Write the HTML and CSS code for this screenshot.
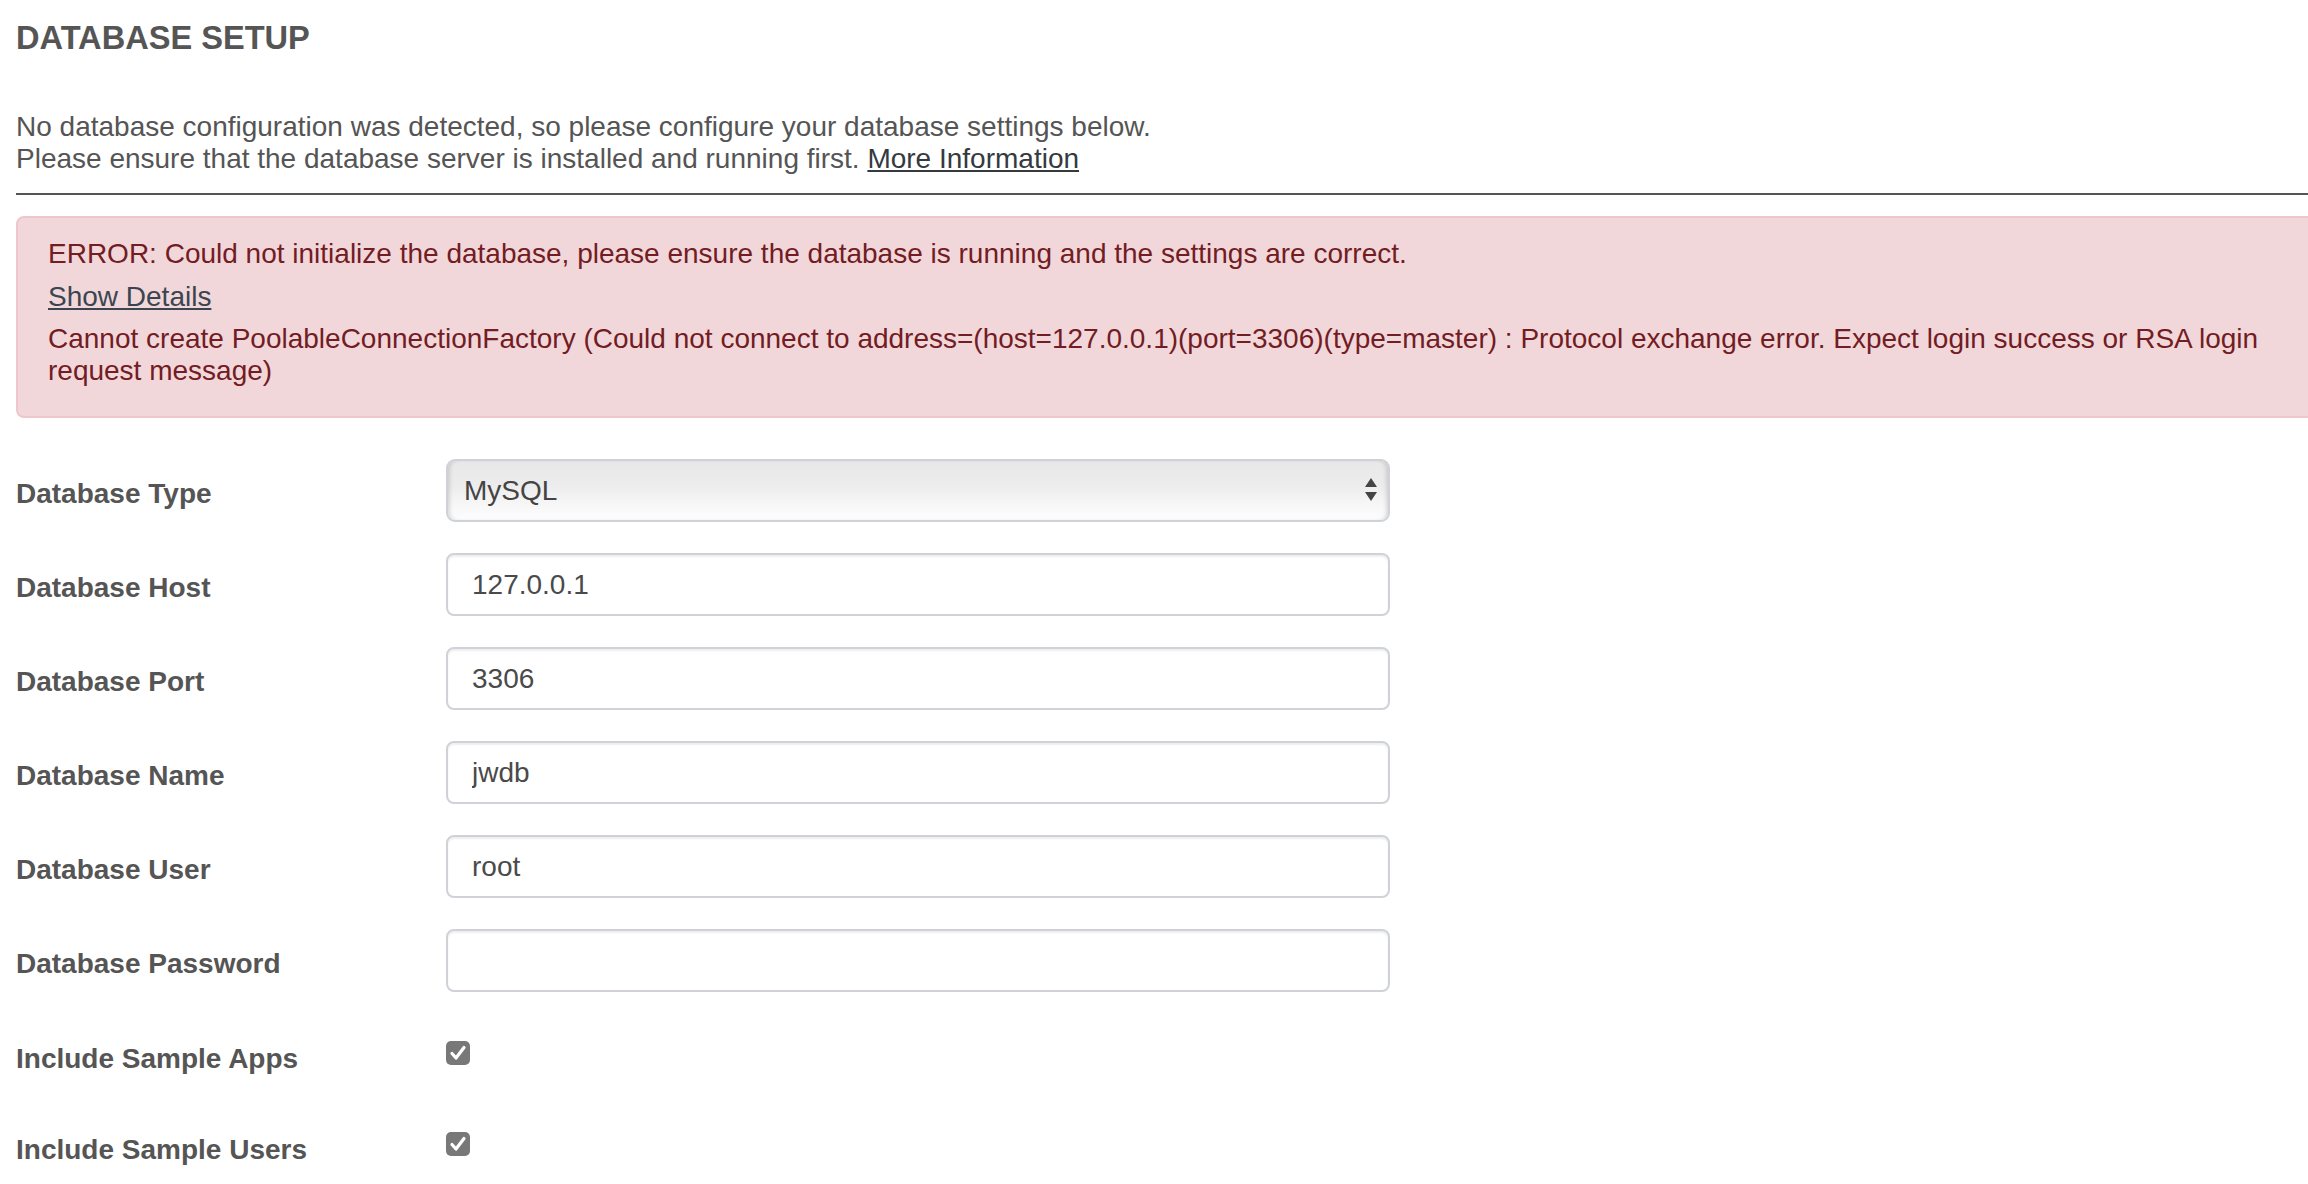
FILE: index.html
```html
<!DOCTYPE html>
<html lang="en">
<head>
<meta charset="utf-8">
<title>Database Setup</title>
<link rel="stylesheet" href="styles.css">
</head>
<body>
<div class="page">
  <h2 class="title">DATABASE SETUP</h2>
  <p class="intro">No database configuration was detected, so please configure your database settings below.<br>Please ensure that the database server is installed and running first. <a class="link" href="#">More Information</a></p>
  <hr class="divider">
  <div class="alert">
    <p class="alert-line">ERROR: Could not initialize the database, please ensure the database is running and the settings are correct.</p>
    <p class="alert-line"><a class="alert-link" href="#">Show Details</a></p>
    <p class="alert-line">Cannot create PoolableConnectionFactory (Could not connect to address=(host=127.0.0.1)(port=3306)(type=master) : Protocol exchange error. Expect login success or RSA login request message)</p>
  </div>
  <form class="form">
    <div class="row">
      <label class="label">Database Type</label>
      <div class="select-wrap">
        <select class="select"><option>MySQL</option></select>
        <svg class="arrows" width="14" height="26" viewBox="0 0 14 26"><path d="M7 1 L13 10 L1 10 Z" fill="#444"/><path d="M1 15 L13 15 L7 24 Z" fill="#444"/></svg>
      </div>
    </div>
    <div class="row">
      <label class="label">Database Host</label>
      <input class="input" type="text" value="127.0.0.1">
    </div>
    <div class="row">
      <label class="label">Database Port</label>
      <input class="input" type="text" value="3306">
    </div>
    <div class="row">
      <label class="label">Database Name</label>
      <input class="input" type="text" value="jwdb">
    </div>
    <div class="row">
      <label class="label">Database User</label>
      <input class="input" type="text" value="root">
    </div>
    <div class="row">
      <label class="label">Database Password</label>
      <input class="input" type="password" value="">
    </div>
    <div class="row row-check">
      <label class="label label-check">Include Sample Apps</label>
      <span class="check"><svg width="24" height="24" viewBox="0 0 24 24"><path d="M6 12.5 L10 17 L18 6.5" fill="none" stroke="#fff" stroke-width="3.2" stroke-linecap="round" stroke-linejoin="round"/></svg></span>
    </div>
    <div class="row row-check">
      <label class="label label-check">Include Sample Users</label>
      <span class="check"><svg width="24" height="24" viewBox="0 0 24 24"><path d="M6 12.5 L10 17 L18 6.5" fill="none" stroke="#fff" stroke-width="3.2" stroke-linecap="round" stroke-linejoin="round"/></svg></span>
    </div>
  </form>
</div>
</body>
</html>
```
FILE: styles.css
```css
html, body {
  margin: 0;
  padding: 0;
  overflow: hidden;
  background: #fff;
}
body {
  font-family: "Liberation Sans", Arial, Helvetica, sans-serif;
  font-size: 28px;
  line-height: 1.15;
  color: #555;
}
.page {
  width: 2324px;
  padding: 19px 0 0 16px;
}
.title {
  margin: 0 0 55px;
  font-size: 32.6px;
  font-weight: bold;
  line-height: 37px;
  color: #555;
}
.intro {
  margin: 0 0 18px;
  color: #555;
}
.link {
  color: #343a40;
  text-decoration: underline;
}
.divider {
  border: 0;
  height: 2px;
  background: #555;
  margin: 0 0 21px;
}
.alert {
  border: 2px solid #efc6cb;
  border-radius: 8px;
  background: #f2d7da;
  padding: 20px 30px 19px;
  color: #721c24;
}
.alert-line {
  margin: 0 0 10px;
}
.alert-link {
  color: #3b4550;
  text-decoration: underline;
}
.form {
  margin-top: 41px;
}
.row {
  display: flex;
  align-items: center;
  height: 63px;
  margin-bottom: 31px;
}
.row-check {
  height: 60px;
}
.label {
  width: 430px;
  flex: none;
  font-weight: bold;
  color: #555;
  padding-top: 7px;
}
.label-check {
  padding-top: 11px;
}
.input {
  box-sizing: border-box;
  width: 944px;
  height: 63px;
  border: 2px solid #cfd3d7;
  border-radius: 8px;
  padding: 0 24px;
  font-family: inherit;
  font-size: 28px;
  color: #4a4a4a;
  background: #fff;
  box-shadow: inset 0 2px 2px rgba(0,0,0,0.07);
  outline: none;
}
.select-wrap {
  position: relative;
  width: 944px;
  height: 63px;
}
.select {
  -webkit-appearance: none;
  appearance: none;
  box-sizing: border-box;
  width: 944px;
  height: 63px;
  border: 2px solid #cfd3d7;
  border-radius: 9px;
  padding: 0 16px;
  font-family: inherit;
  font-size: 28px;
  color: #444;
  background: linear-gradient(to bottom, #e8e8e8 0%, #ececec 40%, #f7f7f7 75%, #fdfdfd 100%);
  box-shadow: inset 4px 0 5px -3px rgba(0,0,0,0.18), inset -4px 0 5px -3px rgba(0,0,0,0.18);
  outline: none;
}
.arrows {
  position: absolute;
  right: 12px;
  top: 18px;
}
.check {
  display: flex;
  width: 24px;
  height: 24px;
  border-radius: 5px;
  background: #787878;
}
```
